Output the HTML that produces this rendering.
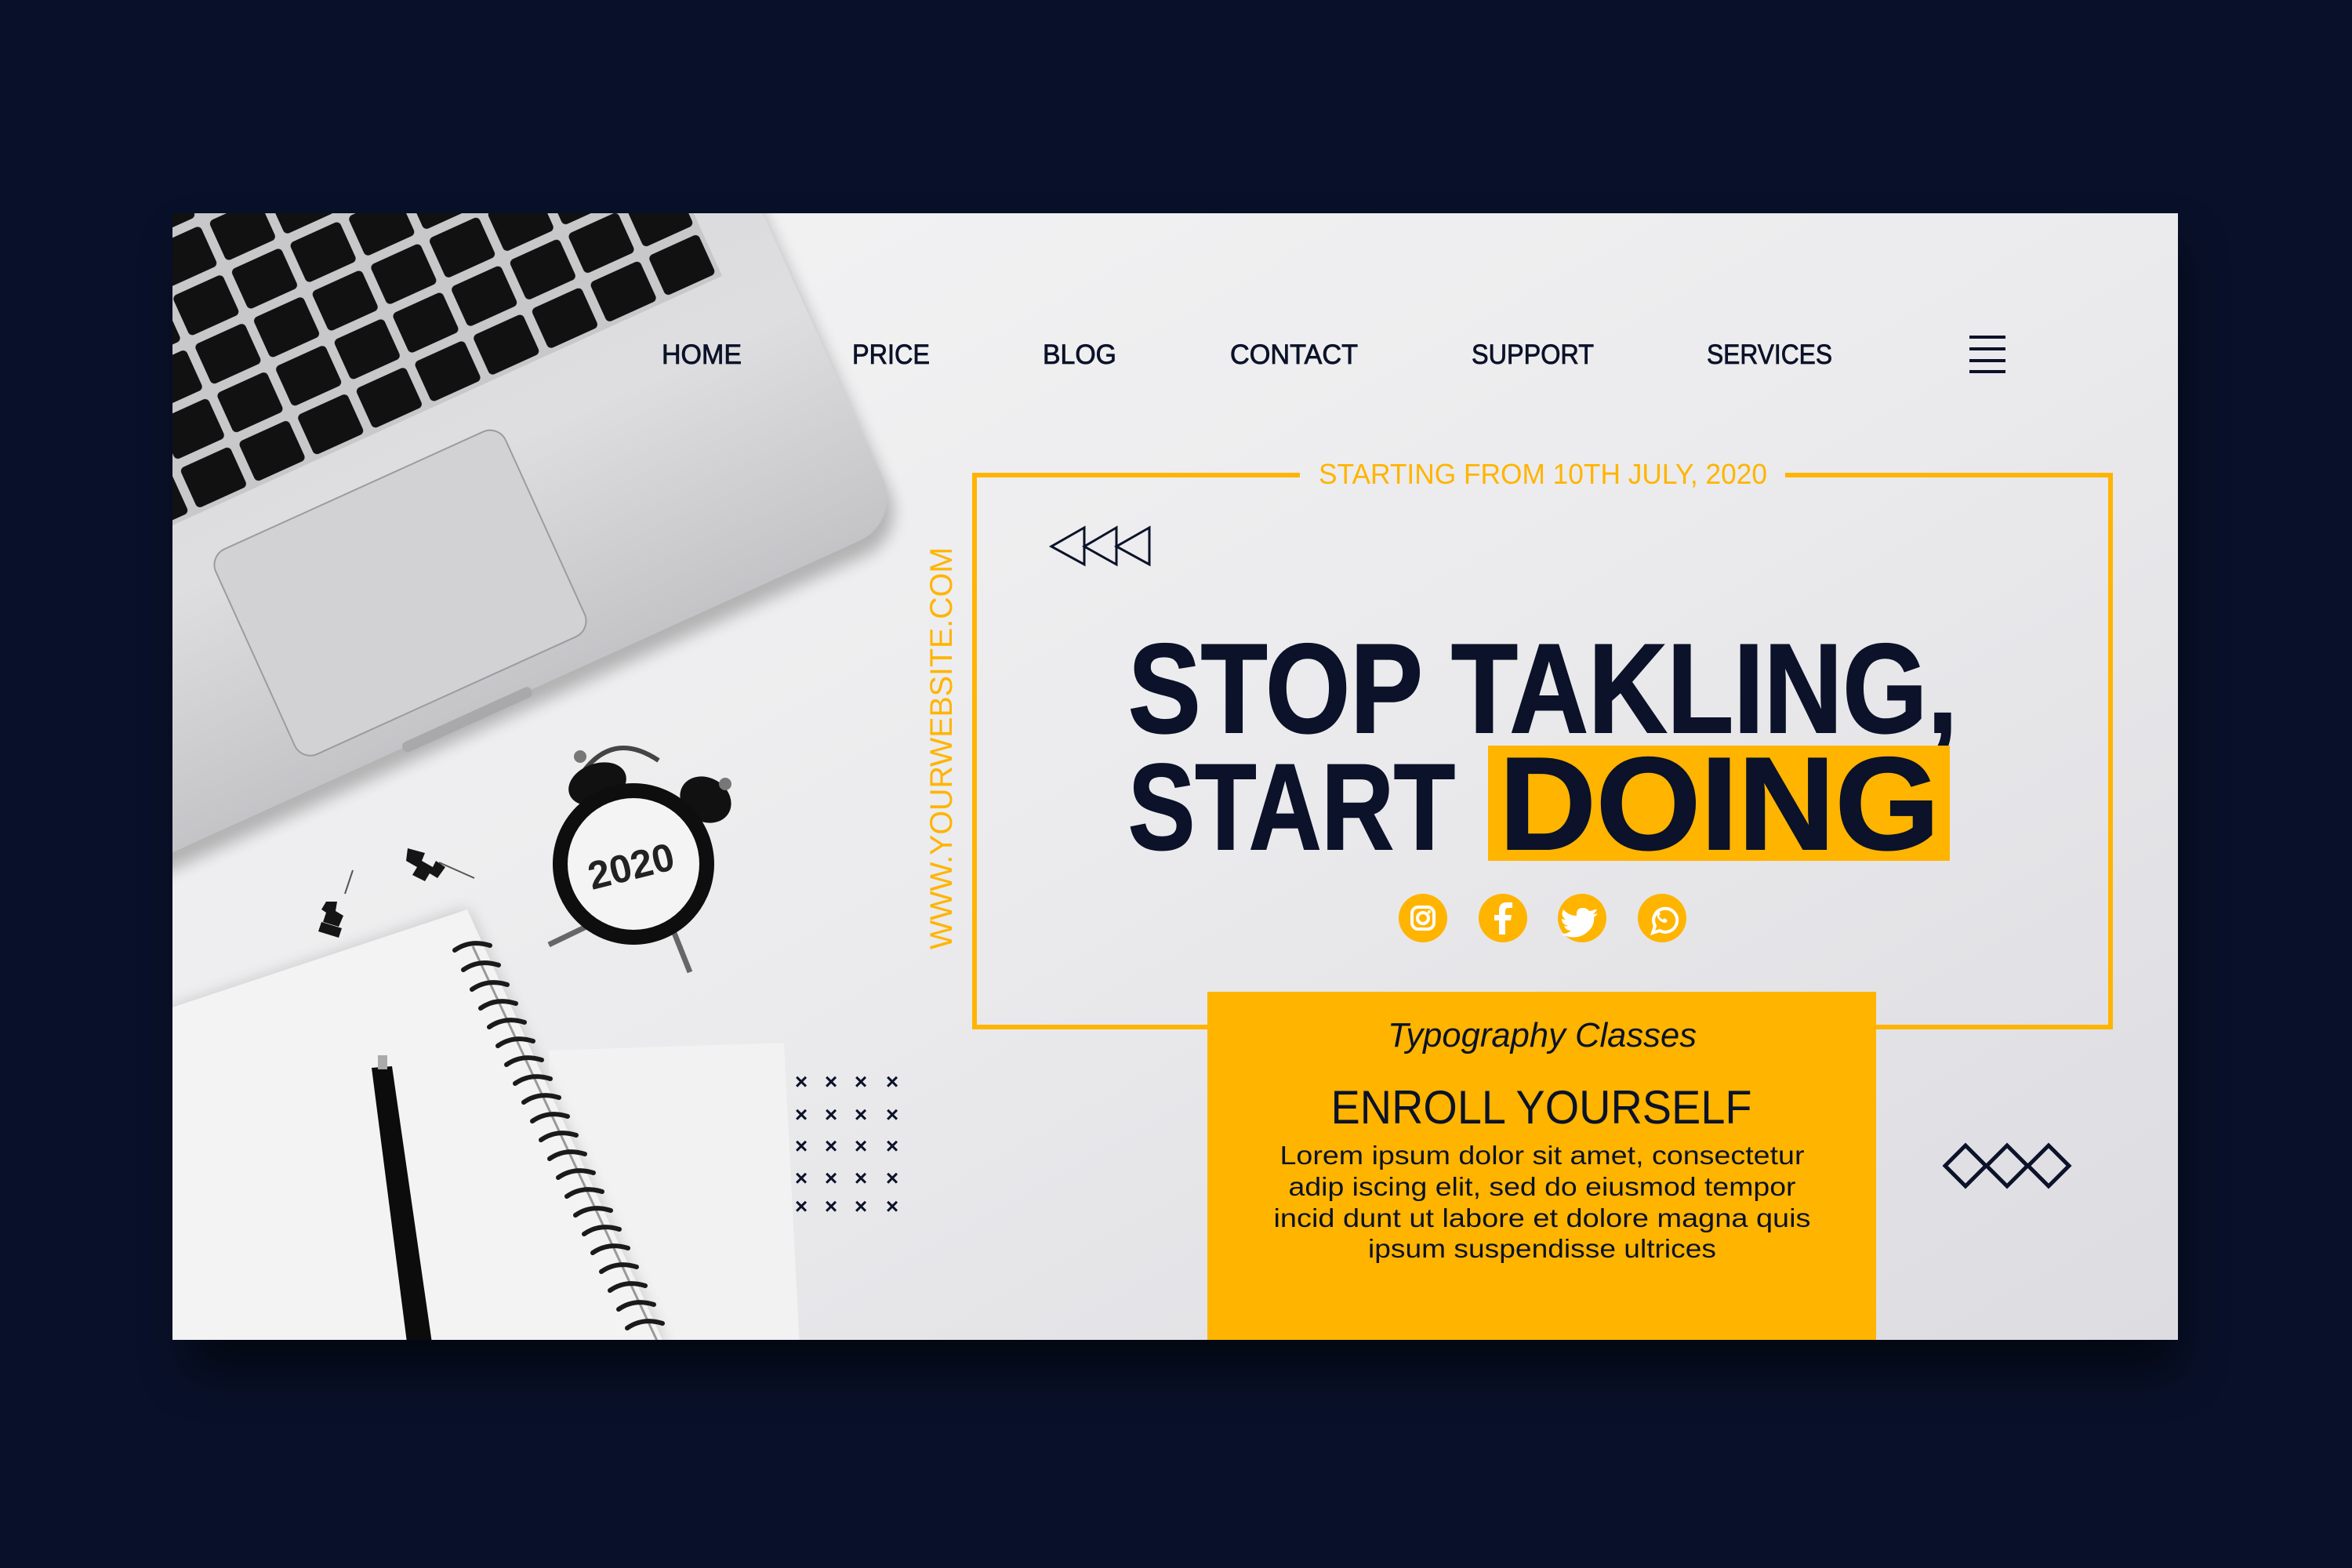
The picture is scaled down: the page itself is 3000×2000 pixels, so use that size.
<!DOCTYPE html>
<html><head><meta charset="utf-8"><style>
html,body{margin:0;padding:0;width:3000px;height:2000px;background:#09112a;overflow:hidden}
svg{position:absolute;left:0;top:0}
</style></head><body>
<svg width="3000" height="2000" viewBox="0 0 3000 2000" xmlns="http://www.w3.org/2000/svg">
<defs>
<linearGradient id="bg" x1="0" y1="0" x2="1" y2="1">
<stop offset="0" stop-color="#f4f4f5"/><stop offset="0.5" stop-color="#ebebed"/><stop offset="1" stop-color="#dcdce1"/></linearGradient>
<linearGradient id="lap" x1="0" y1="0" x2="0" y2="1">
<stop offset="0" stop-color="#cfcfd1"/><stop offset="0.8" stop-color="#dedee0"/><stop offset="1" stop-color="#c4c4c7"/></linearGradient>
<pattern id="keys" width="82" height="68" patternUnits="userSpaceOnUse" x="-80" y="-380">
<rect x="0" y="0" width="82" height="68" fill="#c8c8ca"/>
<rect x="6" y="6" width="70" height="56" rx="6" fill="#111"/>
</pattern>
<clipPath id="card"><rect x="220" y="272" width="2558" height="1437"/></clipPath>
<filter id="sh" x="-20%" y="-20%" width="140%" height="140%"><feGaussianBlur stdDeviation="30"/></filter>
<filter id="sh2" x="-50%" y="-50%" width="200%" height="200%"><feGaussianBlur stdDeviation="10"/></filter>
</defs>
<rect x="240" y="310" width="2540" height="1440" fill="#000" opacity="0.55" filter="url(#sh)"/>
<rect x="220" y="272" width="2558" height="1437" fill="url(#bg)"/>
<g clip-path="url(#card)">
<polygon points="700,1340 1000,1330 1020,1720 700,1720" fill="#f2f2f3"/>
<polygon points="180,1300 596,1160 850,1720 180,1720" fill="#000" opacity="0.18" filter="url(#sh2)"/>
<polygon points="180,1298 596,1160 850,1720 180,1720" fill="#f3f3f4"/>
<path d="M603,1207 L838,1710" stroke="#999" stroke-width="3"/>
<g fill="none" stroke="#1a1a1a" stroke-width="6" stroke-linecap="round">
<path d="M580,1212 q20,-14 45,-6"/><path d="M591,1237 q20,-14 45,-6"/><path d="M602,1262 q20,-14 45,-6"/><path d="M613,1286 q20,-14 45,-6"/><path d="M624,1310 q20,-14 45,-6"/><path d="M635,1334 q20,-14 45,-6"/><path d="M646,1358 q20,-14 45,-6"/><path d="M657,1382 q20,-14 45,-6"/><path d="M668,1406 q20,-14 45,-6"/><path d="M679,1430 q20,-14 45,-6"/><path d="M690,1454 q20,-14 45,-6"/><path d="M701,1478 q20,-14 45,-6"/><path d="M712,1502 q20,-14 45,-6"/><path d="M723,1526 q20,-14 45,-6"/><path d="M734,1550 q20,-14 45,-6"/><path d="M745,1574 q20,-14 45,-6"/><path d="M756,1598 q20,-14 45,-6"/><path d="M767,1622 q20,-14 45,-6"/><path d="M778,1646 q20,-14 45,-6"/><path d="M789,1670 q20,-14 45,-6"/><path d="M800,1694 q20,-14 45,-6"/>
</g>
<path d="M474,1362 L500,1360 L552,1720 L520,1720 Z" fill="#0c0c0c"/>
<rect x="482" y="1346" width="12" height="18" fill="#aaa"/>
<g fill="#151515">
<path d="M520,1082 l22,6 l-4,10 l14,8 l4,-8 l12,8 l-10,14 l-10,-6 l-6,10 l-16,-8 l6,-10 l-14,-8 z"/>
<line x1="560" y1="1100" x2="605" y2="1120" stroke="#555" stroke-width="2"/>
<path d="M416,1150 l14,0 l-2,12 l10,6 l-6,14 l-20,-6 l4,-12 l-6,-4 z"/>
<path d="M410,1176 l26,8 l-4,12 l-26,-8 z"/>
<line x1="440" y1="1140" x2="450" y2="1110" stroke="#555" stroke-width="2"/>
</g>
<g>
<path d="M740,990 q40,-60 100,-20" stroke="#444" stroke-width="6" fill="none"/>
<ellipse cx="762" cy="1000" rx="38" ry="26" fill="#111" transform="rotate(-20 762 1000)"/>
<ellipse cx="900" cy="1020" rx="34" ry="28" fill="#111" transform="rotate(30 900 1020)"/>
<circle cx="740" cy="965" r="8" fill="#777"/><circle cx="925" cy="1000" r="8" fill="#777"/>
<line x1="752" y1="1180" x2="700" y2="1205" stroke="#666" stroke-width="7"/>
<line x1="860" y1="1190" x2="880" y2="1240" stroke="#666" stroke-width="7"/>
<circle cx="808" cy="1102" r="103" fill="#0e0e0e"/>
<circle cx="808" cy="1102" r="84" fill="#f4f4f4"/>
<text x="805" y="1122" font-family="Liberation Sans,sans-serif" font-weight="bold" font-size="50" fill="#222" text-anchor="middle" transform="rotate(-14 805 1105)">2020</text>
</g>
<g transform="translate(1151,665) rotate(-24.4)">
<rect x="-1700" y="-1500" width="1700" height="1520" rx="60" fill="#000" opacity="0.25" filter="url(#sh2)"/>
<rect x="-1700" y="-1500" width="1700" height="1500" rx="60" fill="url(#lap)"/>
<rect x="-1700" y="-1500" width="1620" height="1120" fill="url(#keys)"/>
<rect x="-824" y="-325" width="406" height="287" rx="22" fill="#d2d2d4" stroke="#9c9c9e" stroke-width="2"/>
<rect x="-700" y="-6" width="180" height="14" rx="6" fill="#a9a9ac"/>
</g>
</g>
<g font-family="Liberation Sans,sans-serif" font-size="35" fill="#0b1229" stroke="#0b1229" stroke-width="0.8">
<text x="844" y="464" textLength="102" lengthAdjust="spacingAndGlyphs">HOME</text>
<text x="1087" y="464" textLength="99" lengthAdjust="spacingAndGlyphs">PRICE</text>
<text x="1330" y="464" textLength="94" lengthAdjust="spacingAndGlyphs">BLOG</text>
<text x="1569" y="464" textLength="163" lengthAdjust="spacingAndGlyphs">CONTACT</text>
<text x="1877" y="464" textLength="156" lengthAdjust="spacingAndGlyphs">SUPPORT</text>
<text x="2177" y="464" textLength="160" lengthAdjust="spacingAndGlyphs">SERVICES</text>
</g>
<g stroke="#0b1229" stroke-width="4"><line x1="2512" y1="430" x2="2558" y2="430"/><line x1="2512" y1="445" x2="2558" y2="445"/><line x1="2512" y1="460" x2="2558" y2="460"/><line x1="2512" y1="474" x2="2558" y2="474"/></g>
<path d="M1658,606 H1243 V1310 H2692 V606 H2277" fill="none" stroke="#ffb400" stroke-width="6"/>
<text x="1682" y="617" font-family="Liberation Sans,sans-serif" font-size="36" fill="#ffb400" textLength="572" lengthAdjust="spacingAndGlyphs">STARTING FROM 10TH JULY, 2020</text>
<text transform="translate(1214,1211) rotate(-90)" font-family="Liberation Sans,sans-serif" font-size="40" fill="#ffb400" textLength="513" lengthAdjust="spacingAndGlyphs">WWW.YOURWEBSITE.COM</text>
<g fill="none" stroke="#0b1229" stroke-width="3"><path d="M1383,673 L1341,697 L1383,720 Z"/><path d="M1424,673 L1383,697 L1424,720 Z"/><path d="M1466,673 L1424,697 L1466,720 Z"/></g>
<g font-family="Liberation Sans,sans-serif" font-weight="bold" fill="#0b1229" stroke="#0b1229" stroke-width="2">
<text x="1439" y="934" font-size="162" textLength="1058" lengthAdjust="spacingAndGlyphs">STOP TAKLING,</text>
<text x="1439" y="1083" font-size="156" textLength="417" lengthAdjust="spacingAndGlyphs">START</text>
<rect x="1898" y="951" width="589" height="147" fill="#ffb400" stroke="none"/>
<text x="1912" y="1083" font-size="168" textLength="562" lengthAdjust="spacingAndGlyphs">DOING</text>
</g>
<g fill="#ffb400"><circle cx="1815" cy="1171" r="31"/><circle cx="1917" cy="1171" r="31"/><circle cx="2018" cy="1171" r="31"/><circle cx="2120" cy="1171" r="31"/></g>
<g fill="none" stroke="#fff" stroke-width="4">
<rect x="1801" y="1157" width="28" height="28" rx="8"/><circle cx="1815" cy="1171" r="7"/>
<path d="M2108,1190 l3,-9 a15,15 0 1,1 6,6 z"/>
</g>
<circle cx="1823" cy="1163" r="2" fill="#fff"/>
<path d="M1920,1192 v-18 h7 l1,-7 h-8 v-5 q0,-4 4,-4 h5 v-7 h-7 q-10,0 -10,10 v6 h-6 v7 h6 v18 z" fill="#fff"/>
<path d="M2034,1160 q-3,2 -7,2 q-3,-4 -8,-4 q-9,0 -8,10 q-10,0 -17,-8 q-4,8 3,13 q-3,0 -5,-1 q0,7 8,9 q-3,1 -5,0 q2,6 9,6 q-6,5 -14,4 q25,12 40,-8 q4,-7 3,-13 q3,-2 5,-5 q-3,1 -6,1 q4,-3 5,-6 z" fill="#fff"/>
<path d="M2114,1164 q-2,4 2,9 q5,5 9,4 l2,-3 l-4,-3 l-2,2 q-4,-2 -5,-5 l2,-2 l-2,-4 z" fill="#fff"/>
<g font-family="Liberation Sans,sans-serif" font-weight="bold" font-size="28" fill="#0b1229" text-anchor="middle">
<text x="1022" y="1389">×</text><text x="1060" y="1389">×</text><text x="1098" y="1389">×</text><text x="1138" y="1389">×</text>
<text x="1022" y="1431">×</text><text x="1060" y="1431">×</text><text x="1098" y="1431">×</text><text x="1138" y="1431">×</text>
<text x="1022" y="1471">×</text><text x="1060" y="1471">×</text><text x="1098" y="1471">×</text><text x="1138" y="1471">×</text>
<text x="1022" y="1512">×</text><text x="1060" y="1512">×</text><text x="1098" y="1512">×</text><text x="1138" y="1512">×</text>
<text x="1022" y="1548">×</text><text x="1060" y="1548">×</text><text x="1098" y="1548">×</text><text x="1138" y="1548">×</text>
</g>
<g fill="none" stroke="#0b1229" stroke-width="5"><path d="M2507,1461 L2533,1487 L2507,1513 L2481,1487 Z"/><path d="M2560,1461 L2586,1487 L2560,1513 L2534,1487 Z"/><path d="M2613,1461 L2639,1487 L2613,1513 L2587,1487 Z"/></g>
<rect x="1540" y="1265" width="853" height="444" fill="#ffb400"/>
<g font-family="Liberation Sans,sans-serif" fill="#0b1229" text-anchor="middle">
<text x="1967" y="1335" font-size="44" font-style="italic" textLength="394" lengthAdjust="spacingAndGlyphs">Typography Classes</text>
<text x="1966" y="1433" font-size="60" textLength="537" lengthAdjust="spacingAndGlyphs">ENROLL YOURSELF</text>
<text x="1967" y="1485" font-size="33" textLength="669" lengthAdjust="spacingAndGlyphs">Lorem ipsum dolor sit amet, consectetur</text>
<text x="1967" y="1525" font-size="33" textLength="647" lengthAdjust="spacingAndGlyphs">adip iscing elit, sed do eiusmod tempor</text>
<text x="1967" y="1565" font-size="33" textLength="685" lengthAdjust="spacingAndGlyphs">incid dunt ut labore et dolore magna quis</text>
<text x="1967" y="1604" font-size="33" textLength="444" lengthAdjust="spacingAndGlyphs">ipsum suspendisse ultrices</text>
</g>
</svg>
</body></html>
